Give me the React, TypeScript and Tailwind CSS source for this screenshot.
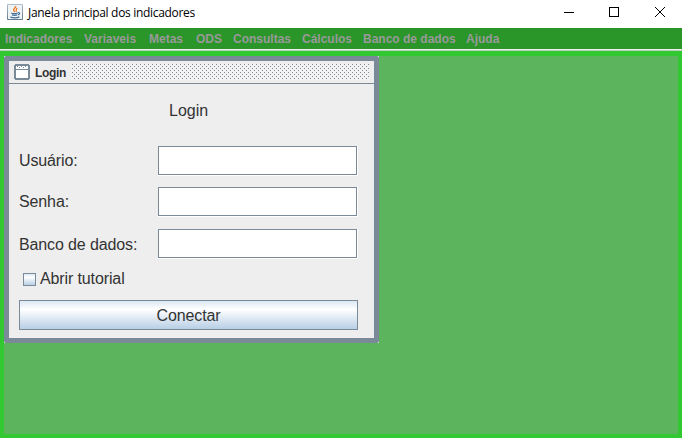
const menus: { label: string; width: string }[] = [
  { label: 'Indicadores', width: 'w-[79px]' },
  { label: 'Variaveis', width: 'w-[65px]' },
  { label: 'Metas', width: 'w-[47px]' },
  { label: 'ODS', width: 'w-[37px]' },
  { label: 'Consultas', width: 'w-[69px]' },
  { label: 'Cálculos', width: 'w-[61px]' },
  { label: 'Banco de dados', width: 'w-[103px]' },
  { label: 'Ajuda', width: 'w-[45px]' },
];

function JavaIcon() {
  return (
    <svg width="16" height="16" viewBox="0 0 16 16" fill="none">
      <defs>
        <linearGradient id="tile" x1="0" y1="0" x2="0" y2="1">
          <stop offset="0" stopColor="#b4c0cb" />
          <stop offset="1" stopColor="#64788c" />
        </linearGradient>
      </defs>
      <rect width="16" height="16" rx="1" fill="url(#tile)" />
      <rect x="1" y="1" width="14" height="14" fill="#f0f3f6" />
      <path d="M8.6 2c.7 1.8-2.8 2.6-2 4.3.3.7 1.2 1 .9 1.9M10.3 4C8.2 5.3 9.9 6.3 8.9 7.8" stroke="#e67a28" strokeWidth="1.3" />
      <path d="M4 9c1.8.6 4.9.6 6.8 0M5 10.9c1.6.5 3.7.5 5.2 0M3.2 13c2.7.9 6.9.9 9.2-.1M10.9 8.8c2.2-.6 2.3 1.3.2 2.1" stroke="#416f99" strokeWidth="1.15" />
    </svg>
  );
}

function WindowButtons() {
  return (
    <div className="ml-auto flex h-full items-start">
      <svg width="118" height="24" viewBox="0 0 118 24" fill="none" stroke="#000" shapeRendering="crispEdges">
        <path d="M0 12.5h10" />
        <rect x="45.5" y="7.5" width="9" height="9" />
        <path d="M91 7l10 10M101 7l-10 10" shapeRendering="auto" />
      </svg>
    </div>
  );
}

function FrameTitle() {
  return (
    <div className="flex h-[23px] shrink-0 border-b border-[#7a8a99] pt-[3px] pl-[5px]">
      <svg width="16" height="16" viewBox="0 0 16 16" shapeRendering="crispEdges">
        <path d="M1 0h14v1h1v14h-1v1H1v-1H0V1h1z" fill="#7a8a99" />
        <rect x="2" y="2" width="12" height="3" fill="#fff" />
        <path d="M3 2.5h11" stroke="#7a8a99" strokeDasharray="1 3" />
        <path d="M5 3.5h8" stroke="#7a8a99" strokeDasharray="1 3" />
        <rect x="2" y="6" width="12" height="8" fill="#fff" />
      </svg>
      <span className="ml-[5px] w-[36px] pt-px text-[12px] leading-[17px] font-bold tracking-[-0.35px] text-[#333]">Login</span>
      <svg width="298" height="16" shapeRendering="crispEdges">
        <defs>
          <pattern id="bumps" width="4" height="4" patternUnits="userSpaceOnUse">
            <rect width="4" height="4" fill="#f3f3f3" />
            <rect x="1" width="1" height="1" fill="#7f8890" />
            <rect x="3" y="2" width="1" height="1" fill="#7f8890" />
          </pattern>
        </defs>
        <rect width="298" height="16" fill="url(#bumps)" />
      </svg>
    </div>
  );
}

function Field({ label, labelClass = '' }: { label: string; labelClass?: string }) {
  return (
    <label className="flex h-[30px] items-center">
      <span className={`w-[139px] text-[16px] leading-[18px] tracking-[-0.12px] whitespace-nowrap ${labelClass}`}>{label}</span>
      <div className="h-[30px] w-[200px] border-r border-b border-white">
        <input className="block h-[29px] w-[199px] border border-[#7a8a99] bg-white px-1 outline-none" />
      </div>
    </label>
  );
}

export default function App() {
  return (
    <div className="flex h-[438px] w-[682px] flex-col overflow-hidden bg-white font-['Liberation_Sans',Arial,sans-serif] text-[#333]">
      <header className="flex h-[28px] shrink-0 items-start pl-[7px]">
        <div className="pt-[4px]"><JavaIcon /></div>
        <span className="ml-[5px] pt-[4px] font-['Open_Sans','Noto_Sans',sans-serif] text-[12px] leading-[18px] tracking-[-0.31px] whitespace-nowrap text-black">
          Janela principal dos indicadores
        </span>
        <WindowButtons />
      </header>
      <nav className="flex h-[21px] shrink-0 bg-[#2a962a] pt-px pl-[5px] text-[12px] leading-[21px] font-bold whitespace-nowrap text-[#999]">
        {menus.map((menu) => (
          <span key={menu.label} className={menu.width}>{menu.label}</span>
        ))}
      </nav>
      <div className="h-[2px] shrink-0 border-t border-[#eee] bg-[#b8cfb8]" />
      <main className="h-[387px] border-x-4 border-t-[5px] border-b-4 border-[#32c832] bg-[#5cb55c]">
        <section className="h-[287px] w-[375px] bg-white">
          <div className="flex h-full flex-col rounded-[2px] border-[5px] border-[#7a8a99] bg-[#eee]">
            <FrameTitle />
            <div className="flex flex-col pl-[10px]">
              <h1 className="mt-[18px] ml-[150px] text-[16px] leading-[18px] font-normal">Login</h1>
              <div className="mt-[26px] flex flex-col">
                <Field label="Usuário:" />
                <div className="mt-[11px]"><Field label="Senha:" /></div>
                <div className="mt-[12px]"><Field label="Banco de dados:" labelClass="pt-[2px]" /></div>
              </div>
              <label className="mt-[11px] ml-[4px] flex h-[18px] items-center gap-[4px] text-[16px] leading-[18px] tracking-[-0.12px]">
                <span className="h-[13px] w-[13px] border border-[#7a8a99] bg-linear-to-b from-[#dde8f3] via-white via-30% to-[#b8cfe5]" />
                Abrir tutorial
              </label>
              <button className="mt-[12px] h-[30px] w-[339px] border border-[#7a8a99] bg-linear-to-b from-[#dde8f3] via-white via-30% to-[#b8cfe5] pt-[2px] text-[16px] leading-[18px] tracking-[-0.1px]">
                Conectar
              </button>
            </div>
          </div>
        </section>
      </main>
    </div>
  );
}
